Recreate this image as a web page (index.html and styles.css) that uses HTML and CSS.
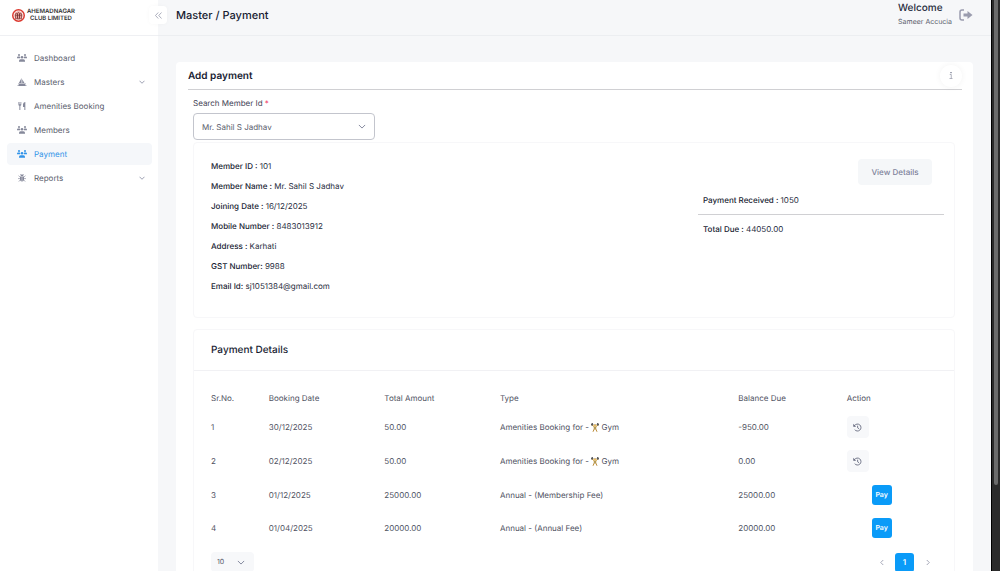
FILE: index.html
```
<!DOCTYPE html>
<html lang="en">
<head>
  <meta charset="UTF-8" />
  <meta name="viewport" content="width=device-width, initial-scale=1.0"/>
  <title>Master / Payment</title>
  <link rel="stylesheet" href="styles.css">
</head>
<body>

  <!-- shared icons -->
  <svg class="sprite" aria-hidden="true">
    <symbol id="users" viewBox="0 0 20 16">
      <circle cx="4" cy="2.2" r="2"/>
      <circle cx="16" cy="2.2" r="2"/>
      <circle cx="10" cy="6.4" r="2.500"/>
      <path d="M0 8.500V7.400q0-2.300 2.300-2.300h2.400q1 0 1.600.6Q5.900 7 6.200 8.500zM20 8.500V7.400q0-2.300-2.300-2.300h-2.400q-1 0-1.600.6.400 1.300.1 2.800z"/>
      <path d="M4 15.500v-1.600q0-3.200 3.200-3.200h5.600q3.200 0 3.200 3.200v1.600z"/>
    </symbol>
    <symbol id="boat" viewBox="0 0 20 18">
      <path d="M9 0v11H3zM10.500 3l5 8h-5zM1 12.500h18l-2.500 3.800h-13zM0 16.500h20V18H0z"/>
    </symbol>
    <symbol id="utensils" viewBox="0 0 18 18">
      <path d="M1 0h1.400v5h1.100V0h1.400v5H6V0h1.400v6q0 2-2.100 2.600V18H3.100V8.600Q1 8 1 6zM16.500 0v18h-2.200v-6.500h-3V4.500Q12.500 0 16.500 0z"/>
    </symbol>
    <symbol id="bug" viewBox="0 0 20 20">
      <path d="M6.500 5a3.500 3.500 0 0 1 7 0zM5 6.500h10v7a5 5 0 0 1-10 0z"/>
      <path d="M1.500 4 5 8M18.500 4 15 8M0 11.500h20M2 19l3.500-4M18 19l-3.500-4M6 0l2 3M14 0l-2 3" fill="none" stroke="currentColor" stroke-width="1.600"/>
      <path d="M10 8v10" stroke="#fff" stroke-width="1.200"/>
    </symbol>
    <symbol id="down" viewBox="0 0 12 8">
      <path d="M1 1.500l5 5 5-5" fill="none" stroke="currentColor" stroke-width="1.500"/>
    </symbol>
    <symbol id="history" viewBox="0 0 16 16">
      <path d="M2.800 4.600A6.200 6.200 0 1 1 3 11.800M8.200 4.800v3.700l2.500 1.700" fill="none" stroke="currentColor" stroke-width="1.500"/>
      <path d="M.5 1.500v5h5z"/>
    </symbol>
    <symbol id="lifter" viewBox="0 0 16 18">
      <path d="M1 3.500h14" stroke="#666" stroke-width="1"/>
      <path d="M1 1v4M3 0v6M13 0v6M15 1v4" stroke="#333" stroke-width="1.500"/>
      <path d="M3.500 4 6 8.500h4L12.500 4" fill="none" stroke="#e3b04b" stroke-width="1.800"/>
      <circle cx="8" cy="4.500" r="2.200" fill="#e9b95a"/>
      <path d="M5.500 7h5v5.500h-5z" fill="#b59a55"/>
      <path d="M6.500 12 4 17.500M9.500 12l2.500 5.500" stroke="#b98a35" stroke-width="2"/>
    </symbol>
  </svg>

  <aside class="sidebar">
    <div class="brand">
      <svg class="brand-mark" viewBox="0 0 26 26">
        <circle cx="13" cy="13" r="11.500" fill="#fff" stroke="#dc3a30" stroke-width="3"/>
        <circle cx="13" cy="13" r="8.500" fill="#e9a19b"/>
        <path d="M7 19V10l2-2 2 2v9M11 19V9l2-2 2 2v10M15 19v-9l2-2 2 2v9M6 19.500h14M7 12.500h12" fill="none" stroke="#6b2b2a" stroke-width="1.200"/>
      </svg>
      <div class="brand-name">AHEMADNAGAR<br>CLUB LIMITED</div>
      <button class="collapse" aria-label="Collapse menu">
        <svg viewBox="0 0 14 14"><path d="M6.500 1 1 7l5.500 6M13 1 7.500 7l5.500 6" fill="none" stroke="currentColor" stroke-width="1.300"/></svg>
      </button>
    </div>
    <nav class="menu">
      <a href="#"><svg class="icon"><use href="#users"/></svg>Dashboard</a>
      <a href="#"><svg class="icon"><use href="#boat"/></svg>Masters<svg class="arrow"><use href="#down"/></svg></a>
      <a href="#"><svg class="icon"><use href="#utensils"/></svg>Amenities Booking</a>
      <a href="#"><svg class="icon"><use href="#users"/></svg>Members</a>
      <a href="#" class="active"><svg class="icon"><use href="#users"/></svg>Payment</a>
      <a href="#"><svg class="icon"><use href="#bug"/></svg>Reports<svg class="arrow"><use href="#down"/></svg></a>
    </nav>
  </aside>

  <div class="page">
    <header class="topbar">
      <h1>Master / Payment</h1>
      <div class="user">
        <strong>Welcome</strong>
        <span>Sameer Accucia</span>
      </div>
      <button class="logout" aria-label="Log out">
        <svg viewBox="0 0 28 24">
          <path d="M10 2H6Q2 2 2 6v12q0 4 4 4h4" fill="none" stroke="currentColor" stroke-width="3"/>
          <path d="M9 9h8V4l10 8-10 8v-5H9z"/>
        </svg>
      </button>
    </header>

    <main class="card">
      <div class="card-head">
        <h2>Add payment</h2>
        <button class="info" aria-label="Information">
          <svg viewBox="0 0 8 14"><path d="M3 0h2v2H3zM1.500 5H4.500v7.500M1 13h6" fill="none" stroke="currentColor" stroke-width="1.300"/></svg>
        </button>
      </div>

      <div class="card-body">
        <label class="field-label" for="member">Search Member Id <span class="required">*</span></label>
        <div class="select-box member-select">
          <select id="member">
            <option>Mr. Sahil S Jadhav</option>
          </select>
          <svg class="arrow"><use href="#down"/></svg>
        </div>

        <section class="panel member">
          <dl class="details">
            <div><dt>Member ID :</dt> <dd>101</dd></div>
            <div><dt>Member Name :</dt> <dd>Mr. Sahil S Jadhav</dd></div>
            <div><dt>Joining Date :</dt> <dd>16/12/2025</dd></div>
            <div><dt>Mobile Number :</dt> <dd>8483013912</dd></div>
            <div><dt>Address :</dt> <dd>Karhati</dd></div>
            <div><dt>GST Number:</dt> <dd>9988</dd></div>
            <div><dt>Email Id:</dt> <dd>sj1051384@gmail.com</dd></div>
          </dl>
          <div class="summary">
            <button class="view">View Details</button>
            <dl class="totals">
              <div><dt>Payment Received :</dt> <dd>1050</dd></div>
              <div><dt>Total Due :</dt> <dd>44050.00</dd></div>
            </dl>
          </div>
        </section>

        <section class="panel payments">
          <h3>Payment Details</h3>
          <div class="payments-body">
            <table>
              <thead>
                <tr>
                  <th class="col-sr">Sr.No.</th>
                  <th class="col-date">Booking Date</th>
                  <th class="col-total">Total Amount</th>
                  <th class="col-type">Type</th>
                  <th class="col-due">Balance Due</th>
                  <th class="col-action">Action</th>
                </tr>
              </thead>
              <tbody>
                <tr>
                  <td>1</td>
                  <td>30/12/2025</td>
                  <td>50.00</td>
                  <td>Amenities Booking for - <svg class="lifter"><use href="#lifter"/></svg> Gym</td>
                  <td>-950.00</td>
                  <td><button class="history" aria-label="History"><svg><use href="#history"/></svg></button></td>
                </tr>
                <tr>
                  <td>2</td>
                  <td>02/12/2025</td>
                  <td>50.00</td>
                  <td>Amenities Booking for - <svg class="lifter"><use href="#lifter"/></svg> Gym</td>
                  <td>0.00</td>
                  <td><button class="history" aria-label="History"><svg><use href="#history"/></svg></button></td>
                </tr>
                <tr class="unpaid">
                  <td>3</td>
                  <td>01/12/2025</td>
                  <td>25000.00</td>
                  <td>Annual - (Membership Fee)</td>
                  <td>25000.00</td>
                  <td><button class="pay">Pay</button></td>
                </tr>
                <tr class="unpaid">
                  <td>4</td>
                  <td>01/04/2025</td>
                  <td>20000.00</td>
                  <td>Annual - (Annual Fee)</td>
                  <td>20000.00</td>
                  <td><button class="pay">Pay</button></td>
                </tr>
              </tbody>
            </table>

            <div class="table-foot">
              <div class="select-box size-select">
                <select aria-label="Rows per page">
                  <option>10</option>
                </select>
                <svg class="arrow"><use href="#down"/></svg>
              </div>
              <div class="pager">
                <button aria-label="Previous page"><svg viewBox="0 0 8 12"><path d="M6.500 1 1.500 6l5 5" fill="none" stroke="currentColor" stroke-width="1.400"/></svg></button>
                <button class="current">1</button>
                <button aria-label="Next page"><svg viewBox="0 0 8 12"><path d="M1.500 1l5 5-5 5" fill="none" stroke="currentColor" stroke-width="1.400"/></svg></button>
              </div>
            </div>
          </div>
        </section>
      </div>
    </main>
  </div>

  <div class="scroll-track">
    <div class="scroll-thumb"></div>
  </div>

</body>
</html>
```
FILE: styles.css
```
* {
  box-sizing: border-box;
}

body {
  margin: 0;
  height: 100vh;
  display: flex;
  overflow: hidden;
  font-family: Inter, "Liberation Sans", sans-serif;
  font-size: 8px;
  line-height: 12px;
  text-rendering: geometricPrecision;
  color: #5a5d6c;
  background: #f6f7f9;
}

h1, h2, h3, dl, dd {
  margin: 0;
}

button, select {
  margin: 0;
  padding: 0;
  border: none;
  background: none;
  font: inherit;
  color: inherit;
  text-rendering: inherit;
}

svg {
  display: block;
  fill: currentColor;
}

.sprite {
  display: none;
}

/* sidebar */
.sidebar {
  flex: none;
  width: 158px;
  background: #fff;
}

.brand {
  position: relative;
  display: flex;
  align-items: center;
  height: 36px;
  padding: 0 0 5px 12px;
  border-bottom: 1px solid #eff0f3;
}

.brand-mark {
  width: 13px;
  height: 13px;
  margin-right: 2px;
}

.brand-name {
  font-size: 6px;
  line-height: 7px;
  font-weight: 600;
  text-align: center;
  color: #333;
}

.collapse {
  position: absolute;
  right: -9px;
  top: 6px;
  width: 18px;
  height: 18px;
  border-radius: 4px;
  background: #fff;
  box-shadow: 0 0 4px rgba(0,0,0,0.03);
  color: #7e8299;
}

.collapse svg {
  width: 7px;
  height: 7px;
  margin: 0 auto;
}

.menu {
  display: flex;
  flex-direction: column;
  gap: 2px;
  padding: 11px 6px 0 7px;
}

.menu a {
  display: flex;
  align-items: center;
  height: 22px;
  padding: 0 7px 0 10px;
  border-radius: 4px;
  color: #5a5d6c;
  text-decoration: none;
}

.menu .icon {
  width: 10px;
  height: 8px;
  margin-right: 7px;
  color: #85889a;
}

.menu a.active {
  background: #f5f7fa;
}

.menu a.active,
.menu .active .icon {
  color: #3093e8;
}

.arrow {
  width: 6px;
  height: 4px;
  color: #7e8299;
}

.menu .arrow {
  margin-left: auto;
}

/* main column */
.page {
  flex: 1;
  min-width: 0;
}

.topbar {
  display: flex;
  align-items: center;
  height: 36px;
  padding: 0 18px 6px 18px;
  border-bottom: 1px solid #eceef1;
}

.topbar h1 {
  margin-right: auto;
  font-size: 11px;
  font-weight: 500;
  color: #181c32;
}

.user {
  display: flex;
  flex-direction: column;
  gap: 2px;
}

.user strong {
  font-size: 10px;
  font-weight: 500;
  color: #252a3c;
}

.user span {
  font-size: 7px;
}

.logout {
  margin-left: 7px;
  color: #9a9cae;
}

.logout svg {
  width: 14px;
  height: 12px;
}

.card {
  margin: 26px 18px 0 18px;
  padding: 0 11px 20px 12px;
  border-radius: 4px;
  background: #fff;
}

.card-head {
  display: flex;
  align-items: center;
  justify-content: space-between;
  height: 28px;
  border-bottom: 1px solid #d0d0d3;
}

.card-head h2 {
  font-size: 10px;
  font-weight: 600;
  color: #181c32;
}

.info {
  width: 22px;
  height: 22px;
  border-radius: 50%;
  background: #fff;
  box-shadow: 0 0 6px rgba(0,0,0,0.05);
  color: #85889a;
}

.info svg {
  width: 4px;
  height: 7px;
  margin: 0 auto;
}

.card-body {
  padding: 7px 7px 0 5px;
}

.field-label {
  display: block;
  margin-bottom: 4px;
  color: #3f4254;
}

.required {
  color: #f1416c;
}

/* the arrow shares the select's grid cell */
.select-box {
  display: grid;
  align-items: center;
}

.select-box select,
.select-box .arrow {
  grid-area: 1 / 1;
}

.select-box select {
  width: 100%;
  height: 100%;
  appearance: none;
}

.select-box .arrow {
  justify-self: end;
  width: 8px;
  height: 5px;
  margin-right: 9px;
  pointer-events: none;
}

.member-select {
  width: 182px;
  height: 27px;
}

.member-select select {
  padding-left: 8px;
  border: 1px solid #c3c5cd;
  border-radius: 4px;
}

.panel {
  border: 1px solid #f7f7f9;
  border-radius: 4px;
}

.member {
  display: flex;
  justify-content: space-between;
  margin-top: 2px;
  padding: 13px 10px 21px 17px;
}

.details {
  line-height: 20px;
  color: #252a3c;
}

.member dt,
.member dd {
  display: inline;
}

.member dt {
  font-weight: 500;
  color: #181c32;
}

.summary {
  display: flex;
  flex-direction: column;
  width: 246px;
  padding-top: 3px;
}

.view {
  align-self: flex-end;
  width: 74px;
  height: 26px;
  margin-right: 12px;
  border-radius: 4px;
  background: #f5f7f9;
  font-weight: 500;
  color: #7e8299;
}

.totals {
  color: #252a3c;
}

.totals div {
  padding: 9px 5px 8px 5px;
}

.totals div + div {
  border-top: 1px solid #d0d0d3;
  padding-top: 8px;
}

.payments {
  margin-top: 11px;
}

.payments h3 {
  padding: 0 17px;
  border-bottom: 1px solid #f1f1f4;
  font-size: 10px;
  line-height: 40px;
  font-weight: 500;
  color: #181c32;
}

.payments-body {
  padding: 15px 17px 10px 17px;
}

table {
  width: 99.5%;
  table-layout: fixed;
  border-collapse: collapse;
}

th, td {
  height: 34px;
  padding: 0;
  text-align: left;
  font-weight: 400;
  color: #4f525f;
}

th {
  height: 24px;
}

.unpaid td {
  height: 33px;
}

.col-sr { width: 8%; }
.col-date { width: 16%; }
.col-total { width: 16%; }
.col-type { width: 33%; }
.col-due { width: 15%; }
.col-action { width: 12%; }

.lifter {
  display: inline-block;
  width: 8px;
  height: 9px;
  vertical-align: -2px;
}

.history {
  display: block;
  width: 22px;
  height: 22px;
  border-radius: 4px;
  background: #f7f8fa;
  color: #5e6278;
}

.history svg {
  width: 9px;
  height: 9px;
  margin: 0 auto;
}

.pay {
  display: block;
  width: 20px;
  height: 20px;
  margin-left: 25px;
  border-radius: 3px;
  background: #0a9bf8;
  font-size: 7px;
  font-weight: 600;
  color: #fff;
}

.table-foot {
  display: flex;
  align-items: center;
  justify-content: space-between;
  margin-top: 8px;
}

.size-select {
  width: 43px;
  height: 20px;
  border-radius: 4px;
  background: #f7f8fa;
}

.size-select select {
  padding-left: 6px;
  font-size: 7px;
}

.pager {
  display: flex;
  gap: 4px;
}

.pager button {
  width: 19px;
  height: 19px;
  border-radius: 3px;
  color: #7e8299;
}

.pager svg {
  width: 4px;
  height: 7px;
  margin: 0 auto;
}

.pager .current {
  background: #0a9bf8;
  font-weight: 600;
  color: #fff;
}

/* window scrollbar */
.scroll-track {
  flex: none;
  width: 9px;
  padding: 0 2px;
  background: #2b2b2b;
  border-left: 1px solid #000;
}

.scroll-thumb {
  height: 85%;
  border-radius: 0 0 3px 3px;
  background: #6b6b6b;
}
```
